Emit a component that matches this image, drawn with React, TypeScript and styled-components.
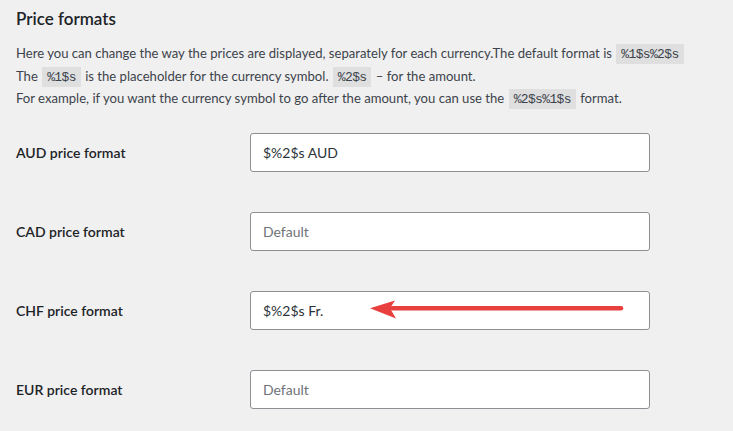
import React from "react";
import styled, { createGlobalStyle } from "styled-components";

const Global = createGlobalStyle`
  html, body { margin: 0; padding: 0; background: #f0f0f1; }
  body {
    font-family: Lato, "Noto Sans", sans-serif;
    color: #3c434a;
    font-size: 13px;
  }
`;

const Page = styled.div`
  padding: 0 16px;
  width: 733px;
  height: 431px;
  box-sizing: border-box;
  overflow: hidden;
`;

const Title = styled.h2`
  margin: 0;
  padding-top: 8px;
  font-size: 17px;
  line-height: 22px;
  font-weight: 600;
  color: #1d2327;
`;

const Intro = styled.p`
  margin: 13px 0 0;
  font-size: 13.1px;
  line-height: 20.5px;
`;

const Code = styled.code`
  font-family: "Liberation Mono", monospace;
  font-size: 13px;
  letter-spacing: -0.65px;
  background: rgba(0, 0, 0, 0.07);
  padding: 3px 5px 2px 5px;
  margin: 0 1px;
`;

const Table = styled.div`
  margin-top: 2px;
  display: flex;
  flex-direction: column;
`;

const Row = styled.div`
  display: grid;
  grid-template-columns: 234px 400px;
  align-items: center;
  height: 79px;
`;

const Label = styled.label`
  font-size: 14px;
  font-weight: 600;
  color: #1d2327;
`;

const Field = styled.div`
  position: relative;
`;

const Input = styled.input`
  box-sizing: border-box;
  width: 400px;
  height: 39px;
  border: 1px solid #8c8f94;
  border-radius: 3px;
  background: #fff;
  padding: 0 12px;
  font-family: Lato, "Noto Sans", sans-serif;
  font-size: 14px;
  color: #2c3338;
  outline: none;
  &::placeholder { color: #6f7378; }
`;

const Arrow = styled.svg`
  position: absolute;
  left: 118px;
  top: 8px;
  pointer-events: none;
`;

const rows = [
  { code: "AUD", value: "$%2$s AUD" },
  { code: "CAD", value: "" },
  { code: "CHF", value: "$%2$s Fr.", arrow: true },
  { code: "EUR", value: "" },
];

export default function App() {
  return (
    <Page>
      <Global />
      <Title>Price formats</Title>
      <Intro>
        Here you can change the way the prices are displayed, separately for each currency.The default format is <Code>%1$s%2$s</Code>
        <br />
        The <Code>%1$s</Code> is the placeholder for the currency symbol. <Code>%2$s</Code> – for the amount.
        <br />
        For example, if you want the currency symbol to go after the amount, you can use the <Code>%2$s%1$s</Code> format.
      </Intro>
      <Table>
        {rows.map((r) => (
          <Row key={r.code}>
            <Label>{r.code} price format</Label>
            <Field>
              <Input defaultValue={r.value} placeholder="Default" />
              {r.arrow && (
                <Arrow width="258" height="24" viewBox="0 0 258 24">
                  <path d="M24 9.3 L253 9.3" stroke="#e8403f" strokeWidth="4.6" strokeLinecap="round" fill="none" />
                  <path d="M2 9.3 L27 1.5 L22 9.3 L28 19.5 Z" fill="#e8403f" />
                </Arrow>
              )}
            </Field>
          </Row>
        ))}
      </Table>
    </Page>
  );
}
